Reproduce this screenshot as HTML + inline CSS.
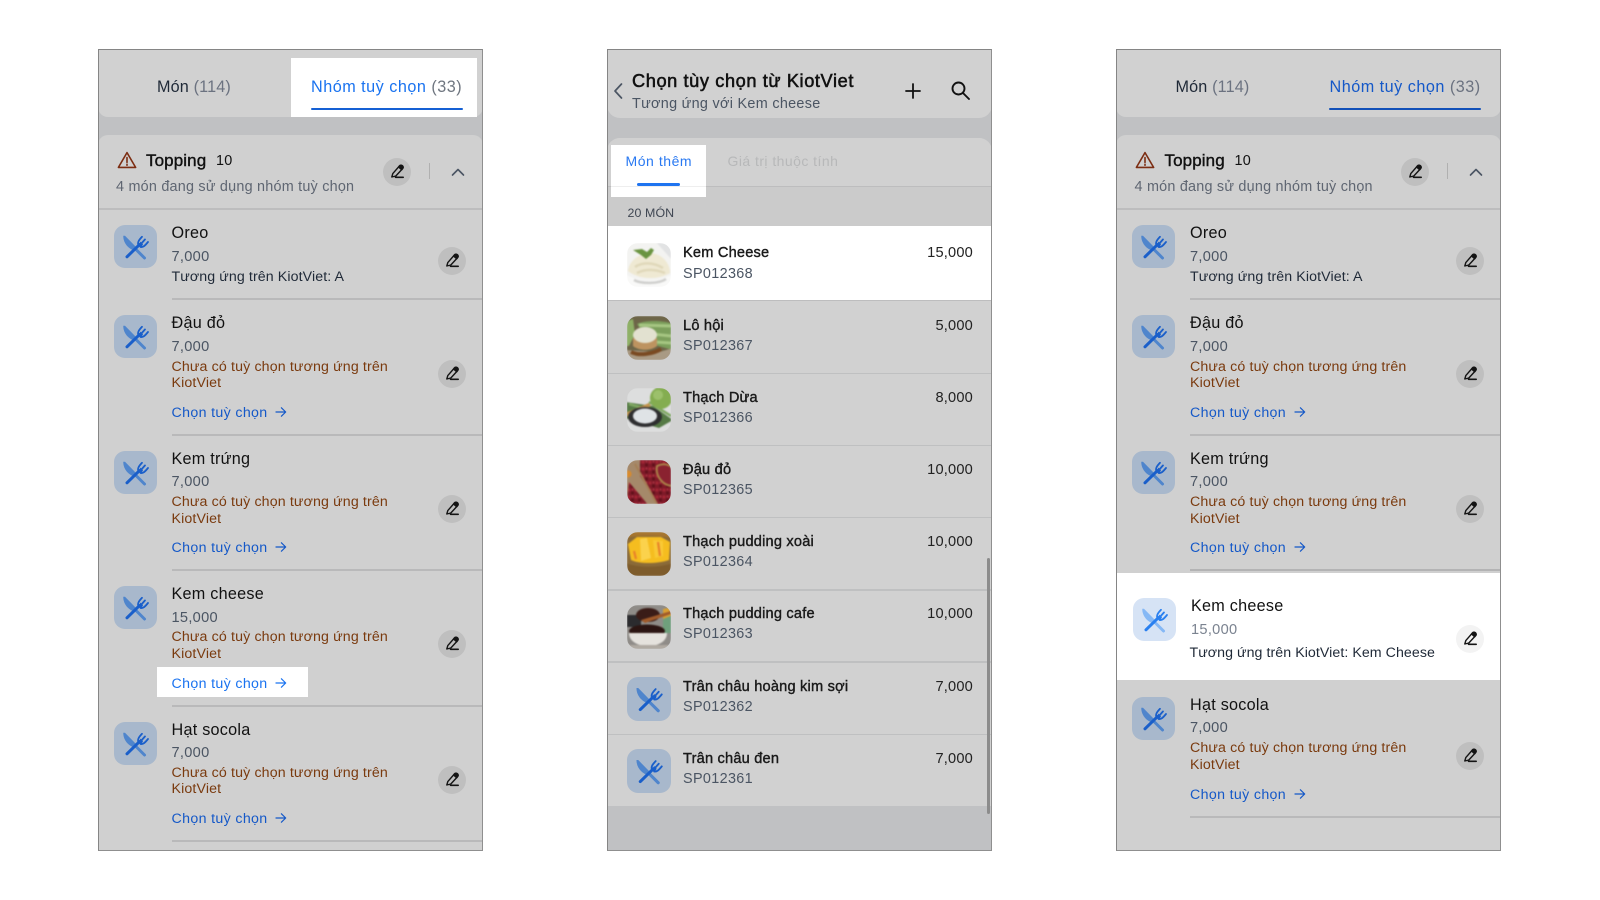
<!DOCTYPE html>
<html lang="vi"><head><meta charset="utf-8"><title>KiotViet</title>
<style>
html,body{margin:0;padding:0;background:#fff;width:1600px;height:900px;overflow:hidden}
body{font-family:"Liberation Sans","Noto Sans CJK SC",sans-serif;color:#111}
#wrap{position:relative;width:1600px;height:900px;overflow:hidden;filter:blur(.35px)}
.c{position:absolute;top:0;width:385px;height:900px}
.c>*{position:absolute}
.bg{left:0;top:49px;width:385px;height:802px;background:#d0d0d0;box-sizing:border-box}
.fr{left:0;top:49px;width:385px;height:802px;box-sizing:border-box;border:1px solid #858585;border-right-color:#8f8f8f;border-bottom-color:#8f8f8f}
.t{white-space:nowrap;line-height:20px;height:20px}
.tab{font-size:16.2px;letter-spacing:.15px;color:#1f2937}.tab i{font-style:normal;color:#6b7280}
.tabb{letter-spacing:.5px;color:#1568e0}
.n{font-size:16.2px;letter-spacing:.25px;color:#111}
.pr{font-size:14.6px;letter-spacing:.3px;color:#4b5563;margin-top:1px}
.m{font-size:14.2px;letter-spacing:.1px;color:#1f2937}
.w{font-size:14.2px;letter-spacing:.14px;color:#7a3a0e}
.l{font-size:14.2px;letter-spacing:.35px;color:#1458c8;margin-top:.5px}
.s{left:74px;width:311px;height:1.5px;background:#b9b9ba}
.b{left:16px;width:43px;height:43px;border-radius:11px;background:#a8b8cc;color:#1a5fca;--k:#4f85cc}
.b svg,.e svg,.th svg{display:block}
.e{left:340px;width:28px;height:28px;border-radius:50%;background:#bfbfbf}
.a{width:12px;height:12px}
.tn{font-size:14.6px;letter-spacing:.2px;color:#1a1a1a;-webkit-text-stroke:.4px #1a1a1a;margin-top:1.5px}
.tc{font-size:14.4px;letter-spacing:.35px;color:#4b5563;margin-top:1px}
.tp{font-size:14.6px;letter-spacing:.2px;color:#222;right:19px;margin-top:1.5px}
.th{left:20px;width:44px;height:44px;border-radius:11px;overflow:hidden}
.th svg{filter:blur(.7px)}
.rs{left:0;width:385px;height:1.5px;background:#bfc0c1}
</style></head><body>
<svg width="0" height="0" style="position:absolute">
<symbol id="fk" viewBox="0 0 43 43">
<path d="M9.3 10.8 L11 10.8 L21.5 21.5 L18.8 25 C13.5 23 9 17 9.3 10.8Z" fill="var(--k)"/>
<path d="M21.5 24 L30.5 33" stroke="var(--k)" stroke-width="3" stroke-linecap="round" fill="none"/>
<g stroke="currentColor" fill="none" stroke-linecap="round">
<path d="M13 31.8 L25.5 19.6" stroke-width="3"/>
<path d="M24.6 20.4 C23 17.6 25 15 28 11.8 M26.6 22 C29.4 22.4 31 20.6 34 17 M26.4 19.6 L31 14.4" stroke-width="1.8"/>
<path d="M24.6 20.4 L26.6 22 L28.4 19.4 L26.6 17.4Z" fill="currentColor" stroke-width="1"/>
</g></symbol>
<symbol id="pn" viewBox="0 0 28 28">
<g fill="none" stroke="#141414" stroke-width="1.4" stroke-linejoin="round" stroke-linecap="round">
<path d="M8.8 19 L9.8 15.6 L16.4 8 C17.3 7 18.6 7 19.5 7.9 C20.3 8.8 20.3 9.9 19.4 10.9 L12.8 18 Z"/>
<path d="M15.6 9 L16.4 8 C17.3 7 18.6 7 19.5 7.9 C20.3 8.8 20.3 9.9 19.4 10.9 L18.6 11.8Z" fill="#141414"/>
<path d="M12.5 19.3 H20.2" stroke-width="1.6"/></g></symbol>
<symbol id="ar" viewBox="0 0 12 12"><path d="M1 6H10.6M6.4 1.8L10.7 6L6.4 10.2" fill="none" stroke="currentColor" stroke-width="1.2" stroke-linecap="round" stroke-linejoin="round"/></symbol>
<pattern id="beans" width="7" height="7" patternUnits="userSpaceOnUse"><rect width="7" height="7" fill="#7f1a28"/><circle cx="2" cy="2" r="1.6" fill="#a42535"/><circle cx="5.5" cy="5" r="1.5" fill="#5f1019"/><circle cx="5.5" cy="1.5" r=".9" fill="#b8394a"/></pattern>
</svg>
<div id="wrap">

<!-- LEFT PANEL -->
<div class="c" style="left:98px">
<div class="bg" style="background:#c0c1c3"></div>
<div style="left:0;top:49px;width:385px;height:68px;background:#d1d1d1;border-radius:0 0 10px 10px"></div>
<div style="left:193px;top:58px;width:186px;height:59px;background:#fff"></div>
<div class="t tab" style="left:59px;top:77px">Món <i>(114)</i></div>
<div class="t tab tabb" style="left:213px;top:77px;color:#1a73f0">Nhóm tuỳ chọn <i style="color:#6f7680">(33)</i></div>
<div style="left:213px;top:107.5px;width:152px;height:2.5px;background:#1560d4;border-radius:2px"></div>
<div style="left:0;top:135px;width:385px;height:716px;background:#d0d0d0;border-radius:10px 10px 0 0"></div>
<svg style="left:19px;top:151px" width="20" height="18" viewBox="0 0 20 18"><path d="M10 1.6 L18.6 16.4 H1.4 Z" fill="none" stroke="#7c2d12" stroke-width="1.6" stroke-linejoin="round"/><path d="M10 6.5V11.4M10 13.3V14.2" stroke="#7c2d12" stroke-width="1.6" stroke-linecap="round"/></svg>
<div class="t" style="left:48px;top:151px;font-size:17px;letter-spacing:.1px;-webkit-text-stroke:.4px #111">Topping</div>
<div class="t" style="left:118px;top:151px;font-size:14.4px;letter-spacing:.2px">10</div>
<div class="t" style="left:18px;top:177px;font-size:14.4px;letter-spacing:.22px;color:#5f6672">4 món đang sử dụng nhóm tuỳ chọn</div>
<div class="e" style="left:285px;top:158px"><svg width="28" height="28"><use href="#pn"/></svg></div>
<div style="left:331px;top:163px;width:1px;height:16px;background:#b0b0b0"></div>
<svg style="left:353px;top:167px" width="14" height="10" viewBox="0 0 14 10"><path d="M1.5 8 L7 2.5 L12.5 8" fill="none" stroke="#4b5563" stroke-width="1.6" stroke-linecap="round" stroke-linejoin="round"/></svg>
<div style="left:0;top:208px;width:385px;height:1.5px;background:#bdbdbe"></div>

<div class="b" style="top:225px"><svg width="43" height="43"><use href="#fk"/></svg></div>
<div class="t n" style="left:73.5px;top:223px">Oreo</div>
<div class="t pr" style="left:73.5px;top:246px">7,000</div>
<div class="t m" style="left:73.5px;top:267px">Tương ứng trên KiotViet: A</div>
<div class="e" style="top:247px"><svg width="28" height="28"><use href="#pn"/></svg></div>
<div class="s" style="top:298px"></div>

<div class="b" style="top:315px"><svg width="43" height="43"><use href="#fk"/></svg></div>
<div class="t n" style="left:73.5px;top:313px">Đậu đỏ</div>
<div class="t pr" style="left:73.5px;top:336px">7,000</div>
<div class="t w" style="left:73.5px;top:357px">Chưa có tuỳ chọn tương ứng trên</div>
<div class="t w" style="left:73.5px;top:373px">KiotViet</div>
<div class="t l" style="left:73.5px;top:402px">Chọn tuỳ chọn</div>
<svg class="a" style="left:177px;top:406px;color:#1458c8"><use href="#ar"/></svg>
<div class="e" style="top:360px"><svg width="28" height="28"><use href="#pn"/></svg></div>
<div class="s" style="top:434px"></div>

<div class="b" style="top:451px"><svg width="43" height="43"><use href="#fk"/></svg></div>
<div class="t n" style="left:73.5px;top:449px">Kem trứng</div>
<div class="t pr" style="left:73.5px;top:471px">7,000</div>
<div class="t w" style="left:73.5px;top:492px">Chưa có tuỳ chọn tương ứng trên</div>
<div class="t w" style="left:73.5px;top:509px">KiotViet</div>
<div class="t l" style="left:73.5px;top:537px">Chọn tuỳ chọn</div>
<svg class="a" style="left:177px;top:541px;color:#1458c8"><use href="#ar"/></svg>
<div class="e" style="top:495px"><svg width="28" height="28"><use href="#pn"/></svg></div>
<div class="s" style="top:569px"></div>

<div class="b" style="top:586px"><svg width="43" height="43"><use href="#fk"/></svg></div>
<div class="t n" style="left:73.5px;top:584px">Kem cheese</div>
<div class="t pr" style="left:73.5px;top:607px">15,000</div>
<div class="t w" style="left:73.5px;top:627px">Chưa có tuỳ chọn tương ứng trên</div>
<div class="t w" style="left:73.5px;top:644px">KiotViet</div>
<div style="left:59px;top:667px;width:151px;height:30px;background:#fff"></div>
<div class="t l" style="left:73.5px;top:673px;color:#1a73f0">Chọn tuỳ chọn</div>
<svg class="a" style="left:177px;top:677px;color:#1a73f0"><use href="#ar"/></svg>
<div class="e" style="top:630px"><svg width="28" height="28"><use href="#pn"/></svg></div>
<div class="s" style="top:705px"></div>

<div class="b" style="top:722px"><svg width="43" height="43"><use href="#fk"/></svg></div>
<div class="t n" style="left:73.5px;top:720px">Hạt socola</div>
<div class="t pr" style="left:73.5px;top:742px">7,000</div>
<div class="t w" style="left:73.5px;top:763px">Chưa có tuỳ chọn tương ứng trên</div>
<div class="t w" style="left:73.5px;top:779px">KiotViet</div>
<div class="t l" style="left:73.5px;top:808px">Chọn tuỳ chọn</div>
<svg class="a" style="left:177px;top:812px;color:#1458c8"><use href="#ar"/></svg>
<div class="e" style="top:766px"><svg width="28" height="28"><use href="#pn"/></svg></div>
<div class="s" style="top:840px"></div>
<div class="fr"></div>
</div>

<!-- MIDDLE PANEL -->
<div class="c" style="left:607px">
<div class="bg" style="background:#c0c1c3"></div>
<div style="left:0;top:49px;width:385px;height:69px;background:#d1d1d1;border-radius:0 0 13px 13px"></div>
<svg style="left:5px;top:82px" width="12" height="18" viewBox="0 0 12 18"><path d="M9.5 2 L3 9 L9.5 16" fill="none" stroke="#4b5563" stroke-width="1.7" stroke-linecap="round" stroke-linejoin="round"/></svg>
<div class="t" style="left:25px;top:71px;font-size:18.2px;letter-spacing:.6px;color:#111;-webkit-text-stroke:.55px #111">Chọn tùy chọn từ KiotViet</div>
<div class="t" style="left:25px;top:94px;font-size:14.4px;letter-spacing:.3px;color:#4b5563">Tương ứng với Kem cheese</div>
<svg style="left:297px;top:82px" width="18" height="18" viewBox="0 0 18 18"><path d="M9 2V16M2 9H16" stroke="#111" stroke-width="1.8" stroke-linecap="round"/></svg>
<svg style="left:343px;top:80px" width="21" height="21" viewBox="0 0 21 21"><circle cx="8.5" cy="8.5" r="6" fill="none" stroke="#111" stroke-width="1.9"/><path d="M13 13 L19 19" stroke="#111" stroke-width="1.9" stroke-linecap="round"/></svg>

<div style="left:0;top:138px;width:385px;height:88px;background:#cbcbcb;border-radius:13px 13px 0 0"></div>
<div style="left:0;top:138px;width:385px;height:48px;background:#d1d1d1;border-radius:13px 13px 0 0"></div>
<div style="left:0;top:186px;width:385px;height:1px;background:#bdbdbe"></div>
<div style="left:4px;top:145px;width:95px;height:52px;background:#fff"></div>
<div style="left:4px;top:186px;width:95px;height:1px;background:#eeeeee"></div>
<div class="t" style="left:18.5px;top:151px;font-size:14px;letter-spacing:.55px;color:#2979f2">Món thêm</div>
<div class="t" style="left:120.5px;top:151px;font-size:14px;letter-spacing:.45px;color:#b7b8b9">Giá trị thuộc tính</div>
<div style="left:30px;top:183px;width:43px;height:2.5px;background:#1f74f0;border-radius:2px"></div>
<div class="t" style="left:20.5px;top:203px;font-size:12.4px;letter-spacing:.1px;color:#3f4652">20 MÓN</div>

<div style="left:0;top:226px;width:385px;height:75px;background:#fff"></div>
<div class="rs" style="top:300px;background:#bdbdbe"></div>
<div style="left:0;top:301px;width:385px;height:505px;background:#d1d1d1"></div>
<div class="rs" style="top:372.5px"></div><div class="rs" style="top:444.5px"></div><div class="rs" style="top:516.5px"></div><div class="rs" style="top:589px"></div><div class="rs" style="top:661px"></div><div class="rs" style="top:733.5px"></div>

<div class="th" style="top:243px"><svg width="44" height="44" viewBox="0 0 44 44"><rect x="-2" y="-2" width="48" height="48" fill="#f3f3f1"/><path d="M28 -2H46V18Z" fill="#e2e3e4"/><path d="M1 28 C2 18 12 10 24 10 C35 11 43 20 43 30 C32 37 12 37 1 28Z" fill="#efe9d3"/><path d="M8 24 C15 19 26 19 36 25 M10 30 C18 26 28 26 38 30" stroke="#e0d8ba" stroke-width="2.5" fill="none"/><path d="M-2 30 C8 40 36 40 46 30 V46 H-2Z" fill="#f9f9f8"/><path d="M7 37 C14 41 32 41 39 36" stroke="#cfcfcd" stroke-width="2.5" fill="none"/><path d="M6 7 L15 6 L20 9 L24 5 L27 7 L24 12 L19 16 L14 12 Z" fill="#6a9440"/></svg></div>
<div class="t tn" style="left:76px;top:241px">Kem Cheese</div><div class="t tc" style="left:76px;top:263px">SP012368</div><div class="t tp" style="top:241px">15,000</div>

<div class="th" style="top:316px"><svg width="44" height="44" viewBox="0 0 44 44"><rect x="-2" y="-2" width="48" height="48" fill="#6d6548"/><path d="M10 8 C18 4 36 4 46 8 V34 L24 28Z" fill="#7c9f5c"/><path d="M12 9 L44 10 M16 17 L44 20 M28 26 L44 27" stroke="#a6c682" stroke-width="3"/><path d="M-2 6 L6 3 L8 18 L2 30 L-2 30Z" fill="#8eb066"/><path d="M-2 34 L32 36 L46 32 V46 H-2Z" fill="#a99a84"/><path d="M4 36 C12 40 26 38 34 33" stroke="#7a4a22" stroke-width="4" fill="none"/><path d="M6 22 H30 V30 C24 35 12 35 6 30Z" fill="#bd9360"/><ellipse cx="18" cy="19" rx="12" ry="8" fill="#e2e1d0"/></svg></div>
<div class="t tn" style="left:76px;top:314px">Lô hội</div><div class="t tc" style="left:76px;top:335px">SP012367</div><div class="t tp" style="top:314px">5,000</div>

<div class="th" style="top:388px"><svg width="44" height="44" viewBox="0 0 44 44"><rect x="-2" y="-2" width="48" height="48" fill="#dddede"/><path d="M-2 14 L26 18 L46 32 L32 40 L-2 30Z" fill="#557a45"/><path d="M2 16 L16 20 M22 14 L44 28" stroke="#7fa862" stroke-width="2.5"/><circle cx="34" cy="10" r="11" fill="#84ad50"/><circle cx="31" cy="7" r="5" fill="#9cc06b"/><path d="M-2 25 L22 15 L24 18 L2 30Z" fill="#c0934c"/><ellipse cx="18" cy="29" rx="17" ry="10" fill="#2e2e30"/><ellipse cx="18" cy="28" rx="12" ry="7.5" fill="#dfe3e6"/></svg></div>
<div class="t tn" style="left:76px;top:386px">Thạch Dừa</div><div class="t tc" style="left:76px;top:407px">SP012366</div><div class="t tp" style="top:386px">8,000</div>

<div class="th" style="top:460px"><svg width="44" height="44" viewBox="0 0 44 44"><rect x="-2" y="-2" width="48" height="48" fill="#a5896a"/><path d="M13 -2 H46 V46 H32 L13 16Z" fill="url(#beans)"/><path d="M2 22 L22 46 H4 L0 40Z" fill="url(#beans)"/><path d="M8 4 L30 44" stroke="#a57f55" stroke-width="2"/><path d="M30 6 C38 2 46 6 46 10 V26 C36 26 28 16 30 6Z" fill="#8a2230" stroke="#aa8148" stroke-width="2"/><circle cx="1" cy="14" r="3.5" fill="#d88a2c"/></svg></div>
<div class="t tn" style="left:76px;top:458px">Đậu đỏ</div><div class="t tc" style="left:76px;top:479px">SP012365</div><div class="t tp" style="top:458px">10,000</div>

<div class="th" style="top:532px"><svg width="44" height="44" viewBox="0 0 44 44"><rect x="-2" y="-2" width="48" height="48" fill="#8a6a38"/><path d="M-2 -2 H46 V6 C30 3 12 3 -2 6Z" fill="#a6752f"/><path d="M1 12 L10 5 L34 5 L43 10 L42 28 C30 32 12 32 4 28Z" fill="#f5bd1f"/><path d="M13 7 L20 6 L24 26 L14 29Z" fill="#fbd24c"/><path d="M26 8 L36 9 L36 24 L28 26Z" fill="#f9c935"/><path d="M31 10 L33 24" stroke="#e8812a" stroke-width="2.2"/><path d="M7 19 L9 27" stroke="#e8812a" stroke-width="2.2"/><path d="M-2 31 C12 36 32 36 46 31 V46 H-2Z" fill="#7e5c2c"/></svg></div>
<div class="t tn" style="left:76px;top:530px">Thạch pudding xoài</div><div class="t tc" style="left:76px;top:551px">SP012364</div><div class="t tp" style="top:530px">10,000</div>

<div class="th" style="top:605px"><svg width="44" height="44" viewBox="0 0 44 44"><rect x="-2" y="-2" width="48" height="48" fill="#8f8c88"/><rect x="-2" y="10" width="16" height="12" fill="#2b2b2e"/><path d="M36 8 H46 V28 H36Z" fill="#6fa07c"/><path d="M36 4 L46 2 V10 L36 14Z" fill="#d9a032"/><ellipse cx="21" cy="10" rx="12" ry="7" fill="#3a1c17"/><path d="M14 15 L44 6 L44 9 L18 18Z" fill="#a05a2a"/><ellipse cx="20" cy="26" rx="18" ry="6.5" fill="#2c1512"/><path d="M2 28 H40 C40 36 32 41 21 41 C10 41 2 36 2 28Z" fill="#e5e2dd"/><path d="M-2 40 H46 V46 H-2Z" fill="#b0aaa2"/></svg></div>
<div class="t tn" style="left:76px;top:602px">Thạch pudding cafe</div><div class="t tc" style="left:76px;top:623px">SP012363</div><div class="t tp" style="top:602px">10,000</div>

<div class="b" style="left:20px;top:677px;width:44px;height:44px"><svg width="44" height="44"><use href="#fk"/></svg></div>
<div class="t tn" style="left:76px;top:675px">Trân châu hoàng kim sợi</div><div class="t tc" style="left:76px;top:696px">SP012362</div><div class="t tp" style="top:675px">7,000</div>

<div class="b" style="left:20px;top:749px;width:44px;height:44px"><svg width="44" height="44"><use href="#fk"/></svg></div>
<div class="t tn" style="left:76px;top:747px">Trân châu đen</div><div class="t tc" style="left:76px;top:768px">SP012361</div><div class="t tp" style="top:747px">7,000</div>

<div style="left:380px;top:558px;width:3px;height:256px;background:#8c8c8c;border-radius:2px"></div>
<div class="fr"></div>
</div>

<!-- RIGHT PANEL -->
<div class="c" style="left:1116px">
<div class="bg" style="background:#c0c1c3"></div>
<div style="left:0;top:49px;width:385px;height:68px;background:#d1d1d1;border-radius:0 0 10px 10px"></div>
<div class="t tab" style="left:59.5px;top:77px">Món <i>(114)</i></div>
<div class="t tab tabb" style="left:213.5px;top:77px;color:#1458c8">Nhóm tuỳ chọn <i>(33)</i></div>
<div style="left:213px;top:107.5px;width:152px;height:2.5px;background:#1250b8;border-radius:2px"></div>
<div style="left:0;top:135px;width:385px;height:716px;background:#d0d0d0;border-radius:10px 10px 0 0"></div>
<svg style="left:19px;top:151px" width="20" height="18" viewBox="0 0 20 18"><path d="M10 1.6 L18.6 16.4 H1.4 Z" fill="none" stroke="#7c2d12" stroke-width="1.6" stroke-linejoin="round"/><path d="M10 6.5V11.4M10 13.3V14.2" stroke="#7c2d12" stroke-width="1.6" stroke-linecap="round"/></svg>
<div class="t" style="left:48.5px;top:151px;font-size:17px;letter-spacing:.1px;-webkit-text-stroke:.4px #111">Topping</div>
<div class="t" style="left:118.5px;top:151px;font-size:14.4px;letter-spacing:.2px">10</div>
<div class="t" style="left:18.5px;top:177px;font-size:14.4px;letter-spacing:.22px;color:#5f6672">4 món đang sử dụng nhóm tuỳ chọn</div>
<div class="e" style="left:285px;top:158px"><svg width="28" height="28"><use href="#pn"/></svg></div>
<div style="left:331px;top:163px;width:1px;height:16px;background:#b0b0b0"></div>
<svg style="left:353px;top:167px" width="14" height="10" viewBox="0 0 14 10"><path d="M1.5 8 L7 2.5 L12.5 8" fill="none" stroke="#4b5563" stroke-width="1.6" stroke-linecap="round" stroke-linejoin="round"/></svg>
<div style="left:0;top:208px;width:385px;height:1.5px;background:#bdbdbe"></div>

<div class="b" style="top:225px"><svg width="43" height="43"><use href="#fk"/></svg></div>
<div class="t n" style="left:74px;top:223px">Oreo</div>
<div class="t pr" style="left:74px;top:246px">7,000</div>
<div class="t m" style="left:74px;top:267px">Tương ứng trên KiotViet: A</div>
<div class="e" style="top:247px"><svg width="28" height="28"><use href="#pn"/></svg></div>
<div class="s" style="top:298px"></div>

<div class="b" style="top:315px"><svg width="43" height="43"><use href="#fk"/></svg></div>
<div class="t n" style="left:74px;top:313px">Đậu đỏ</div>
<div class="t pr" style="left:74px;top:336px">7,000</div>
<div class="t w" style="left:74px;top:357px">Chưa có tuỳ chọn tương ứng trên</div>
<div class="t w" style="left:74px;top:373px">KiotViet</div>
<div class="t l" style="left:74px;top:402px">Chọn tuỳ chọn</div>
<svg class="a" style="left:177.5px;top:406px;color:#1458c8"><use href="#ar"/></svg>
<div class="e" style="top:360px"><svg width="28" height="28"><use href="#pn"/></svg></div>
<div class="s" style="top:434px"></div>

<div class="b" style="top:451px"><svg width="43" height="43"><use href="#fk"/></svg></div>
<div class="t n" style="left:74px;top:449px">Kem trứng</div>
<div class="t pr" style="left:74px;top:471px">7,000</div>
<div class="t w" style="left:74px;top:492px">Chưa có tuỳ chọn tương ứng trên</div>
<div class="t w" style="left:74px;top:509px">KiotViet</div>
<div class="t l" style="left:74px;top:537px">Chọn tuỳ chọn</div>
<svg class="a" style="left:177.5px;top:541px;color:#1458c8"><use href="#ar"/></svg>
<div class="e" style="top:495px"><svg width="28" height="28"><use href="#pn"/></svg></div>
<div class="s" style="top:569px;height:2px;background:#b3b3b4"></div>

<div style="left:0;top:573px;width:385px;height:107px;background:#fff"></div>
<div class="b" style="top:598px;left:17px;background:#d6e3f5;color:#2a80f0;--k:#85b8f5"><svg width="43" height="43"><use href="#fk"/></svg></div>
<div class="t n" style="left:75px;top:596px">Kem cheese</div>
<div class="t pr" style="left:75px;top:619px;color:#7b8390">15,000</div>
<div class="t m" style="left:73.5px;top:643px;letter-spacing:.06px">Tương ứng trên KiotViet: Kem Cheese</div>
<div class="e" style="top:625px;background:#f3f3f3"><svg width="28" height="28"><use href="#pn"/></svg></div>

<div class="b" style="top:697px"><svg width="43" height="43"><use href="#fk"/></svg></div>
<div class="t n" style="left:74px;top:695px">Hạt socola</div>
<div class="t pr" style="left:74px;top:717px">7,000</div>
<div class="t w" style="left:74px;top:738px">Chưa có tuỳ chọn tương ứng trên</div>
<div class="t w" style="left:74px;top:755px">KiotViet</div>
<div class="t l" style="left:74px;top:784px">Chọn tuỳ chọn</div>
<svg class="a" style="left:177.5px;top:788px;color:#1458c8"><use href="#ar"/></svg>
<div class="e" style="top:742px"><svg width="28" height="28"><use href="#pn"/></svg></div>
<div class="s" style="top:816px"></div>
<div class="fr"></div>
</div>

</div>
</body></html>
